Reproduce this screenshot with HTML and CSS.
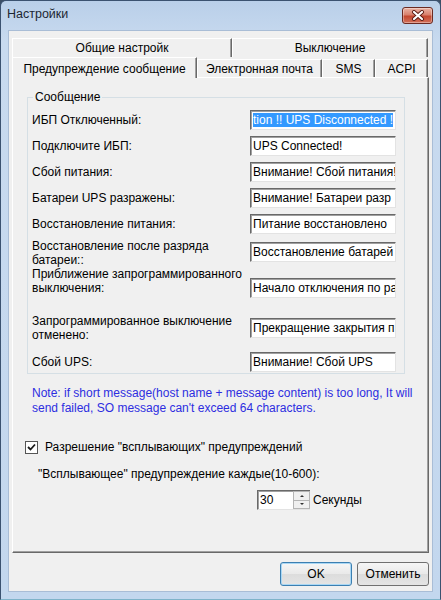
FILE: index.html
```html
<!DOCTYPE html>
<html lang="ru">
<head>
    <meta charset="UTF-8">
    <meta name="viewport" content="width=device-width, initial-scale=1.0">
    <title>Настройки</title>
    <link rel="stylesheet" href="styles.css">
</head>
<body>

    <div class="window">
        <div class="titlebar">
            <span class="title">Настройки</span>
            <button class="close" aria-label="Закрыть">
                <svg width="14" height="11" viewBox="0 0 14 11">
                    <path d="M3 2 L11 9 M11 2 L3 9" stroke="#5a1a12" stroke-width="4" stroke-linecap="round"/>
                    <path d="M3 2 L11 9 M11 2 L3 9" stroke="#ffffff" stroke-width="2.2" stroke-linecap="round"/>
                </svg>
            </button>
        </div>

        <div class="client">
            <div class="tabs">
                <div class="tab-row back">
                    <div class="tab tab-general">Общие настройк</div>
                    <div class="tab tab-shutdown">Выключение</div>
                </div>
                <div class="tab-row front">
                    <div class="tab tab-alert active">Предупреждение сообщение</div>
                    <div class="tab tab-mail">Электронная почта</div>
                    <div class="tab tab-sms">SMS</div>
                    <div class="tab tab-acpi">ACPI</div>
                </div>
            </div>

            <div class="panel">
                <fieldset class="group">
                    <legend>Сообщение</legend>

                    <div class="row">
                        <label>ИБП Отключенный:</label>
                        <div class="field"><span class="selected">tion !! UPS Disconnected !</span></div>
                    </div>
                    <div class="row">
                        <label>Подключите ИБП:</label>
                        <div class="field">UPS Connected!</div>
                    </div>
                    <div class="row">
                        <label>Сбой питания:</label>
                        <div class="field">Внимание! Сбой питания!</div>
                    </div>
                    <div class="row">
                        <label>Батареи UPS разражены:</label>
                        <div class="field">Внимание! Батареи разр</div>
                    </div>
                    <div class="row">
                        <label>Восстановление питания:</label>
                        <div class="field">Питание восстановлено</div>
                    </div>
                    <div class="row two low">
                        <label>Восстановление после разряда<br>батареи::</label>
                        <div class="field">Восстановление батарей</div>
                    </div>
                    <div class="row tall">
                        <label>Приближение запрограммированного<br>выключения:</label>
                        <div class="field">Начало отключения по ра</div>
                    </div>
                    <div class="row two">
                        <label>Запрограммированное выключение<br>отменено:</label>
                        <div class="field">Прекращение закрытия п</div>
                    </div>
                    <div class="row last">
                        <label>Сбой UPS:</label>
                        <div class="field">Внимание! Сбой UPS</div>
                    </div>
                </fieldset>

                <p class="note">Note: if short message(host name + message content) is too long, It will<br>send failed, SO message can't exceed 64 characters.</p>

                <div class="check">
                    <span class="checkbox">
                        <svg width="9" height="9" viewBox="0 0 9 9">
                            <path d="M1 4 L3.5 6.5 L8 1.5" fill="none" stroke="#1a1a1a" stroke-width="1.8"/>
                        </svg>
                    </span>
                    <span>Разрешение "всплывающих" предупреждений</span>
                </div>

                <div class="interval">"Всплывающее" предупреждение каждые(10-600):</div>

                <div class="spin-row">
                    <div class="spin">
                        <div class="spin-value">30</div>
                        <div class="spin-buttons">
                            <span class="spin-btn"><i class="arrow up"></i></span>
                            <span class="spin-btn"><i class="arrow down"></i></span>
                        </div>
                    </div>
                    <span class="unit">Секунды</span>
                </div>
            </div>

            <div class="buttons">
                <button class="btn btn-default">OK</button>
                <button class="btn">Отменить</button>
            </div>
        </div>
    </div>

</body>
</html>
```

FILE: styles.css
```css
* {
    box-sizing: border-box;
}

body {
    margin: 0;
    background-color: #3c4f66;
    font-family: 'Liberation Sans', Arial, sans-serif;
    font-size: 12px;
    color: #000;
}

.window {
    width: 441px;
    height: 600px;
    display: flex;
    flex-direction: column;
    background: linear-gradient(#b9cfe9, #c8daef 40px, #c3d7ee);
    border: 1px solid #3b5270;
    border-bottom-color: #7fb3c9;
    border-radius: 6px 6px 0 0;
}

/* title bar */

.titlebar {
    height: 29px;
    display: flex;
    align-items: center;
    justify-content: space-between;
    padding: 0 7px 3px 6px;
}

.title {
    font-size: 12.5px;
    color: #1c2633;
}

.close {
    width: 31px;
    height: 17px;
    margin-top: 2px;
    padding: 0;
    display: flex;
    align-items: center;
    justify-content: center;
    border: 1px solid #6b2a22;
    border-radius: 3px;
    background: linear-gradient(#eab3a5, #d9806c 45%, #c4472f 55%, #d2715a);
    box-shadow: inset 0 0 0 1px rgba(255, 255, 255, 0.35);
}

/* client area */

.client {
    flex: 1;
    margin: 0 7px 7px 7px;
    display: flex;
    flex-direction: column;
    background-color: #f0f0f0;
    border: 1px solid #a9bdd6;
}

.tabs {
    margin: 7px 3px 0 3px;
}

.tab-row {
    display: flex;
}

.tab {
    display: flex;
    align-items: center;
    justify-content: center;
    white-space: nowrap;
    background-color: #f0f0f0;
    border-top: 1px solid #ffffff;
    border-left: 1px solid #ffffff;
    border-right: 1px solid #696969;
    box-shadow: inset -1px 0 #a0a0a0;
}

.back .tab {
    height: 19px;
    padding-bottom: 1px;
}

.front .tab {
    height: 18px;
    margin-top: 2px;
    padding-top: 1px;
}

.front .tab.active {
    height: 21px;
    margin-top: 0;
    margin-bottom: -1px;
    position: relative;
}

.tab-general { width: 220px; }
.tab-shutdown { width: 196px; }
.tab-alert { width: 185px; }
.tab-mail { width: 125px; }
.tab-sms { width: 53px; }
.tab-acpi { width: 53px; }

/* page of the active tab */

.panel {
    height: 476px;
    margin: 0 3px;
    border-top: 1px solid #ffffff;
    border-left: 1px solid #ffffff;
    border-right: 1px solid #696969;
    border-bottom: 1px solid #696969;
    box-shadow: inset -1px -1px #a0a0a0;
}

.group {
    width: 378px;
    margin: 12px 0 0 14px;
    padding: 3px 8px 1px 4px;
    border: 1px solid #d5dfe5;
    border-radius: 0;
}

.group legend {
    padding: 0 2px;
    margin-left: 1px;
    line-height: 14px;
}

.row {
    height: 26px;
    display: flex;
    align-items: center;
    justify-content: space-between;
}

.row label {
    line-height: 14px;
    white-space: nowrap;
}

.row.two {
    height: 30px;
}

.row.low label {
    margin-top: 2px;
}

.row.tall {
    height: 46px;
    align-items: flex-start;
}

.row.tall .field {
    margin-top: 11px;
}

.row.last {
    height: 29px;
    padding-top: 8px;
}

.field {
    width: 146px;
    height: 20px;
    flex-shrink: 0;
    padding: 2px 0 0 2px;
    overflow: hidden;
    white-space: nowrap;
    background-color: #ffffff;
    border-top: 1px solid #696969;
    border-left: 1px solid #696969;
    border-right: 1px solid #e3e3e3;
    border-bottom: 1px solid #e3e3e3;
    box-shadow: inset 1px 1px #a0a0a0;
    line-height: 14px;
}

.selected {
    background-color: #3399ff;
    color: #ffffff;
}

.note {
    margin: 12px 0 0 19px;
    line-height: 15px;
    color: #2d2de0;
}

.check {
    display: flex;
    align-items: center;
    gap: 7px;
    margin: 24px 0 0 12px;
    line-height: 15px;
}

.checkbox {
    width: 13px;
    height: 13px;
    display: flex;
    align-items: center;
    justify-content: center;
    background-color: #ffffff;
    border: 1px solid #555555;
}

.interval {
    margin: 12px 0 0 25px;
    line-height: 15px;
}

.spin-row {
    display: flex;
    align-items: center;
    gap: 3px;
    margin: 8px 0 0 244px;
}

.spin {
    display: flex;
    height: 20px;
    background-color: #ffffff;
    border-top: 1px solid #696969;
    border-left: 1px solid #696969;
    border-bottom: 1px solid #e3e3e3;
    box-shadow: inset 1px 1px #a0a0a0;
}

.spin-value {
    width: 35px;
    padding: 2px 0 0 2px;
    line-height: 14px;
}

.spin-buttons {
    width: 17px;
    display: flex;
    flex-direction: column;
}

.spin-btn {
    flex: 1;
    display: flex;
    align-items: center;
    justify-content: center;
    background-color: #f0f0f0;
    border: 1px solid #b5b5b5;
}

.spin-btn + .spin-btn {
    border-top: none;
}

.arrow {
    width: 0;
    height: 0;
    border-left: 2px solid transparent;
    border-right: 2px solid transparent;
}

.arrow.up {
    border-bottom: 2px solid #333333;
}

.arrow.down {
    border-top: 2px solid #333333;
}

.unit {
    white-space: nowrap;
}

/* dialog buttons */

.buttons {
    display: flex;
    justify-content: flex-end;
    gap: 5px;
    margin: 9px 3px 0 0;
}

.btn {
    width: 72px;
    height: 24px;
    padding: 0;
    font-family: inherit;
    font-size: 12px;
    color: #000;
    background: linear-gradient(#f6f6f6, #e9e9e9 50%, #dcdcdc 50%, #e4e4e4);
    border: 1px solid #707070;
    border-radius: 3px;
}

.btn-default {
    border-color: #3c7fb1;
    box-shadow: inset 0 0 0 1px #a9d7f4;
}
```
